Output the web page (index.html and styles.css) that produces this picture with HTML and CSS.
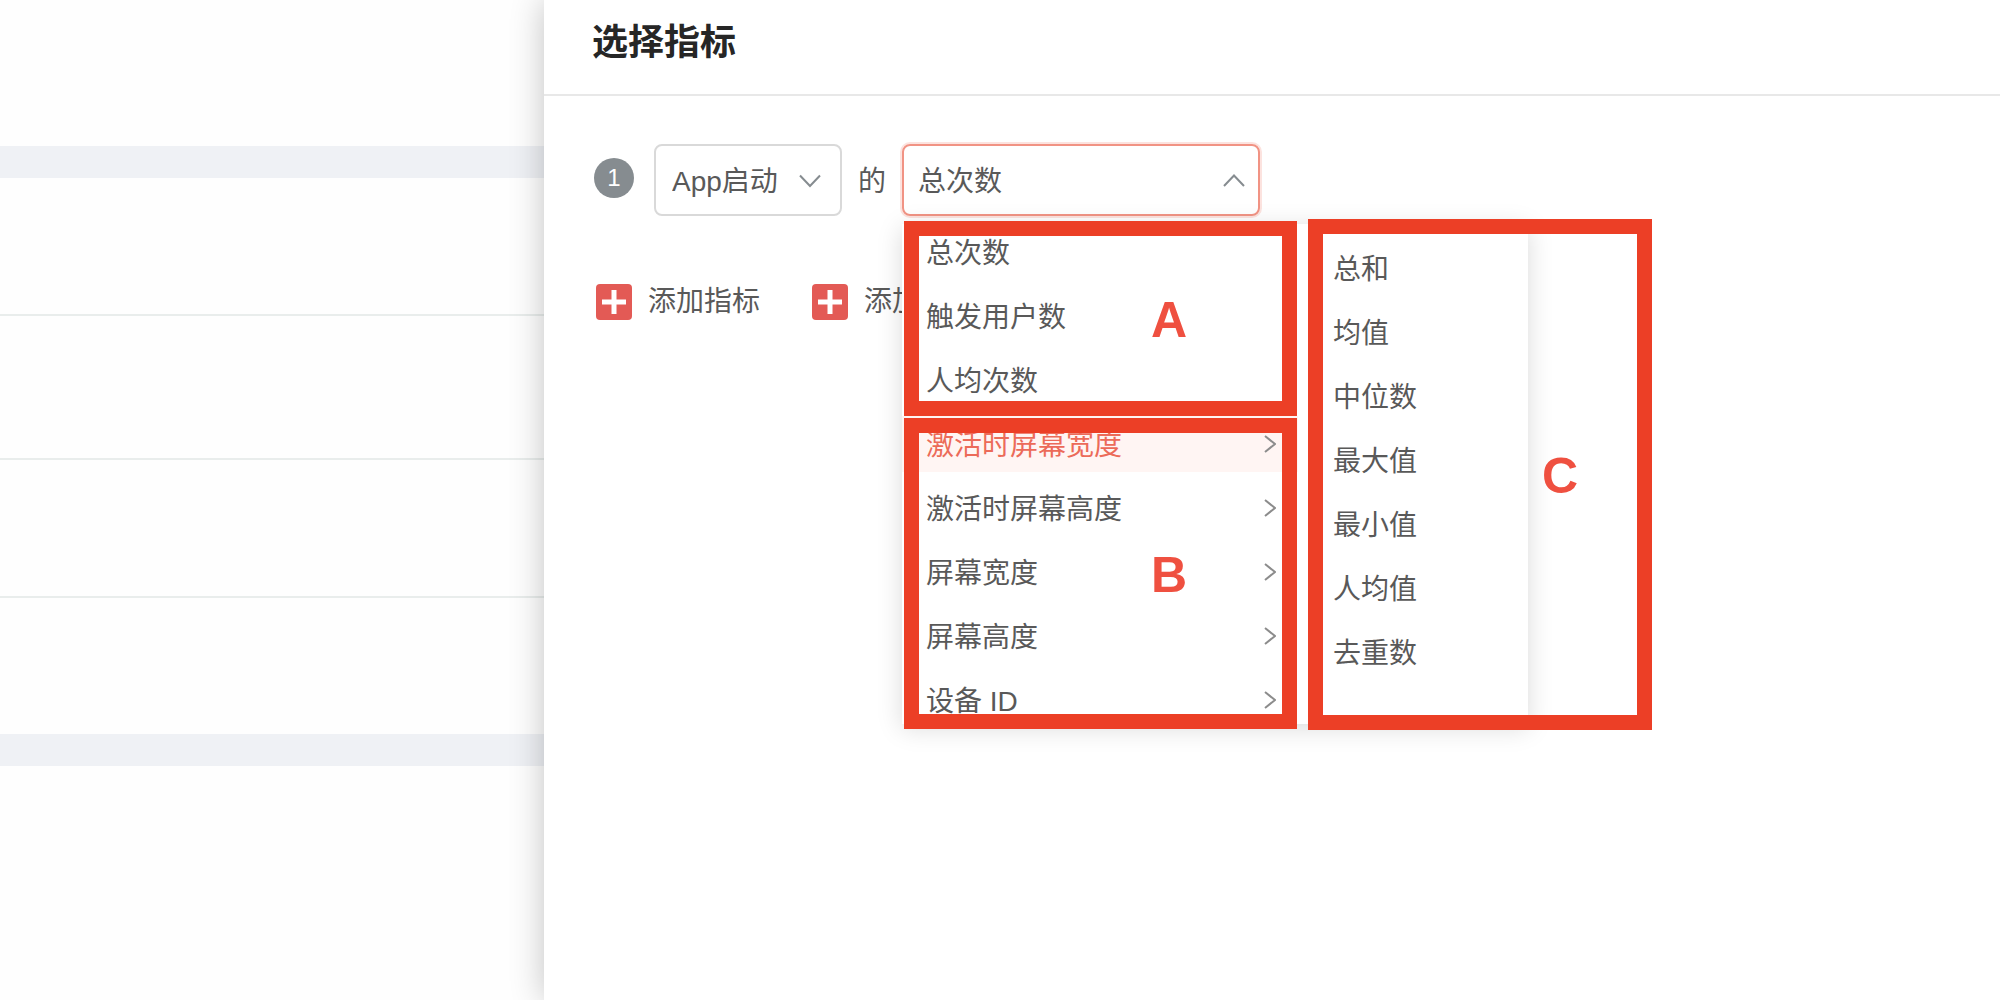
FILE: index.html
```html
<!DOCTYPE html>
<html lang="zh-CN">
<head>
<meta charset="utf-8">
<title>选择指标</title>
<link rel="stylesheet" href="styles.css">
</head>
<body>
<div class="page">
  <div class="backdrop">
    <div class="block block-top"></div>
    <div class="block block-rows">
      <div class="row"></div>
      <div class="row"></div>
      <div class="row"></div>
      <div class="row"></div>
    </div>
    <div class="block block-rest"></div>
  </div>
  <main class="drawer">
    <header class="drawer-header"><h1 class="title">选择指标</h1></header>
    <div class="drawer-body">
      <div class="metric">
        <span class="badge">1</span>
        <div class="field field-event">
          <select class="select" aria-label="事件"><option>App启动</option></select>
          <svg class="arrow" viewBox="0 0 24 16"><path d="M2 2.500L12 13L22 2.500"/></svg>
        </div>
        <span class="of">的</span>
        <div class="field field-measure">
          <select class="select select-open" aria-label="指标"><option>总次数</option></select>
          <svg class="arrow" viewBox="0 0 24 16"><path d="M2 13L12 2.500L22 13"/></svg>
          <div class="popup">
            <div class="menu">
              <button class="item">总次数</button>
              <button class="item">触发用户数</button>
              <button class="item">人均次数</button>
              <button class="item item-active">激活时屏幕宽度<svg class="more" viewBox="0 0 12 18"><path d="M1 1L11 9L1 17"/></svg></button>
              <button class="item">激活时屏幕高度<svg class="more" viewBox="0 0 12 18"><path d="M1 1L11 9L1 17"/></svg></button>
              <button class="item">屏幕宽度<svg class="more" viewBox="0 0 12 18"><path d="M1 1L11 9L1 17"/></svg></button>
              <button class="item">屏幕高度<svg class="more" viewBox="0 0 12 18"><path d="M1 1L11 9L1 17"/></svg></button>
              <button class="item">设备 ID<svg class="more" viewBox="0 0 12 18"><path d="M1 1L11 9L1 17"/></svg></button>
            </div>
            <div class="menu submenu">
              <button class="item">总和</button>
              <button class="item">均值</button>
              <button class="item">中位数</button>
              <button class="item">最大值</button>
              <button class="item">最小值</button>
              <button class="item">人均值</button>
              <button class="item">去重数</button>
            </div>
            <div class="frame frame-a">A</div>
            <div class="frame frame-b">B</div>
            <div class="frame frame-c">C</div>
          </div>
        </div>
      </div>
      <div class="actions">
        <button class="add"><svg class="plus" viewBox="0 0 36 36"><rect width="36" height="36" rx="4"/><path d="M6 18H30M18 6V30"/></svg>添加指标</button>
        <button class="add"><svg class="plus" viewBox="0 0 36 36"><rect width="36" height="36" rx="4"/><path d="M6 18H30M18 6V30"/></svg>添加</button>
      </div>
    </div>
  </main>
</div>
</body>
</html>
```
FILE: styles.css
```css
* {
  box-sizing: border-box;
}

body {
  margin: 0;
  background: #fff;
  color: #595959;
  font: 28px/40px "Liberation Sans", "Noto Sans CJK SC", sans-serif;
}

button,
select {
  border: 0;
  background: none;
  color: inherit;
  font: inherit;
}

.page {
  display: flex;
  min-height: 100vh;
  overflow: hidden;
}

/* Page behind the drawer */
.backdrop {
  display: flex;
  flex-direction: column;
  gap: 32px;
  width: 27.2%;
  background: #eff1f5;
}

.block {
  background: #fefefe;
}

.block-top {
  height: 146px;
}

.block-rest {
  flex: 1;
}

.row {
  height: 138px;
  border-bottom: 2px solid #e9edec;
}

.row:nth-child(2) {
  height: 144px;
}

.row:last-child {
  height: 136px;
  border-bottom: 0;
}

/* Drawer */
.drawer {
  position: relative;
  flex: 1;
  background: #fff;
  box-shadow: 0 0 32px rgba(0, 0, 0, 0.24);
}

.drawer-header {
  padding: 19px 48px 27px;
  border-bottom: 2px solid #e8e8e8;
}

.title {
  margin: 0;
  color: #262626;
  font-size: 36px;
  line-height: 48px;
}

.drawer-body {
  padding: 48px 50px;
}

.metric {
  display: flex;
  align-items: center;
}

.badge {
  width: 40px;
  height: 40px;
  margin: 0 20px 4px 0;
  border-radius: 50%;
  background: #868c90;
  color: #fff;
  font-size: 24px;
  text-align: center;
}

.field {
  position: relative;
}

.field-event {
  width: 188px;
}

.field-measure {
  width: 358px;
}

.of {
  margin: 0 16px;
  padding-top: 4px;
}

.select {
  display: block;
  width: 100%;
  height: 72px;
  padding: 4px 14px 0;
  border: 2px solid #d9d9d9;
  border-radius: 8px;
  appearance: none;
}

.field-event .select {
  padding: 4px 16px 0;
}

.select-open {
  border-color: #f19384;
  box-shadow: 0 0 0 2px #fce3df;
}

.arrow {
  position: absolute;
  top: 29px;
  right: 20px;
  width: 24px;
  height: 16px;
  fill: none;
  stroke: #868c90;
  stroke-width: 2;
}

.field-measure .arrow {
  right: 14px;
}

/* Two-level menu, opened below its field */
.popup {
  position: absolute;
  top: 80px;
  left: 0;
  display: flex;
  height: 500px;
  box-shadow: 0 4px 24px rgba(0, 0, 0, 0.15);
}

.menu {
  display: flex;
  flex-direction: column;
  gap: 8px;
  width: 406px;
  padding-right: 10px;
  background: #fff;
  overflow: hidden;
}

.submenu {
  width: 220px;
  padding-top: 16px;
  border-left: 1px solid #e8e8e8;
}

.item {
  display: flex;
  flex: none;
  justify-content: space-between;
  align-items: center;
  height: 56px;
  padding: 3px 22px 0 24px;
}

.item-active {
  background: #fff5f3;
  color: #ec6b59;
}

.more {
  width: 12px;
  height: 18px;
  margin-bottom: 3px;
  fill: none;
  stroke: #8c8c8c;
  stroke-width: 2;
}

/* Lettered call-outs over the menu */
.frame {
  position: absolute;
  display: flex;
  align-items: center;
  padding-top: 2px;
  border: 15px solid #ec3f26;
  color: #ef5040;
  font-size: 50px;
  font-weight: bold;
}

.frame-a {
  top: -3px;
  left: 2px;
  width: 393px;
  height: 195px;
  padding-left: 232px;
}

.frame-b {
  top: 194px;
  left: 2px;
  width: 393px;
  height: 311px;
  padding-left: 232px;
}

.frame-c {
  top: -5px;
  left: 406px;
  width: 344px;
  height: 511px;
  padding-left: 219px;
}

.actions {
  display: flex;
  gap: 52px;
  padding: 66px 2px 0;
}

.add {
  display: flex;
  align-items: center;
  gap: 16px;
  padding: 0;
}

.plus {
  width: 36px;
  height: 36px;
  fill: #e35a55;
}

.plus path {
  stroke: #fff;
  stroke-width: 5;
}
```
